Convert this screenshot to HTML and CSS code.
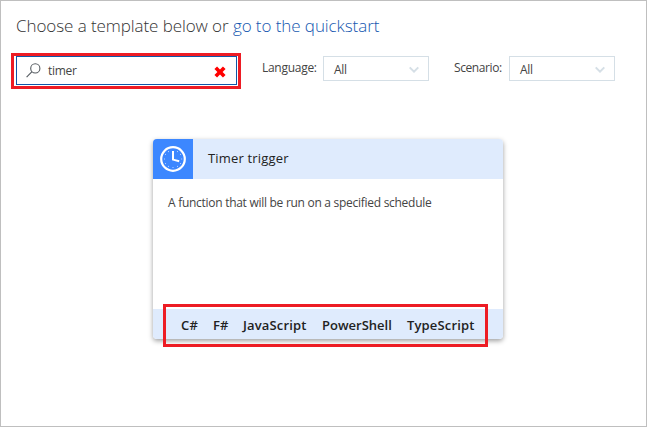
FILE: index.html
```html
<!DOCTYPE html>
<html lang="en">
<head>
<meta charset="utf-8">
<title>Choose a template</title>
<link rel="stylesheet" href="styles.css">
</head>
<body>
<main class="page">
  <h1 class="title"><span>Choose a template below or</span> <a class="link">go to the quickstart</a></h1>
  <div class="filters">
    <div class="search-mark">
      <div class="search">
        <svg class="search-icon" width="15" height="15" viewBox="0 0 15 15"><circle cx="9.3" cy="5.4" r="4.6"/><path d="M6 8.7L.6 14.2"/></svg>
        <span class="query">timer</span>
        <svg class="clear" width="12" height="12" viewBox="0 0 11 11"><path d="M2.8.4L5.5 3.1 8.2.4l2.4 2.4-2.7 2.7 2.7 2.7-2.4 2.4-2.7-2.7-2.7 2.7L.4 8.2l2.7-2.7L.4 2.8z"/></svg>
      </div>
    </div>
    <label class="label language">Language:</label>
    <div class="select"><span>All</span><svg width="10" height="8" viewBox="0 0 10 8"><path d="M.7 1.4L5 5.7l4.3-4.3"/></svg></div>
    <label class="label scenario">Scenario:</label>
    <div class="select"><span>All</span><svg width="10" height="8" viewBox="0 0 10 8"><path d="M.7 1.4L5 5.7l4.3-4.3"/></svg></div>
  </div>
  <article class="card">
    <header class="card-head">
      <div class="card-icon">
        <svg width="26" height="26" viewBox="0 0 26 26"><circle class="rim" cx="13" cy="13" r="11.8"/><path class="hands" d="M13 5v8.6l6.2 1.7"/><path class="ticks" d="M17 5.6h1M20 8.4h1M20 17.6h1M17 20.4h1M12.5 21.5h1M8 20.4h1M5 17.6h1M4 13h1M5 8.4h1M8 5.6h1M21.2 13h1"/></svg>
      </div>
      <h2 class="card-title">Timer trigger</h2>
    </header>
    <p class="description">A function that will be run on a specified schedule</p>
    <footer class="card-foot">
      <div class="languages">
        <span class="cs">C#</span><span class="fs">F#</span><span class="js">JavaScript</span><span class="ps">PowerShell</span><span class="ts">TypeScript</span>
      </div>
    </footer>
  </article>
</main>
</body>
</html>
```
FILE: styles.css
```css
* { box-sizing: border-box; }
body { margin: 0; background: #fff; color: #444; font: 12px/16px "Open Sans", sans-serif; letter-spacing: -.28px; }
.page { height: 427px; border: 1px solid #bfbfbf; padding: 12px 0 0 10px; }
.title { margin: 0 0 0 5px; height: 26px; line-height: 26px; font-size: 17px; font-weight: 300; letter-spacing: -.08px; white-space: nowrap; color: #333; }
.link { color: #1558b0; }
.filters { display: flex; align-items: flex-start; margin-top: 14px; height: 36px; }
.search-mark { width: 230px; height: 36px; border: 3px solid #ed1c24; padding: 0 1px 0 2px; }
.search { display: flex; align-items: center; height: 29px; border: 1px solid #0f56a8; padding: 0 10px 0 9px; }
.search-icon { fill: none; stroke: #555b60; stroke-width: 1.1; }
.query { margin: 1px 0 0 7px; }
.clear { margin: 3px 0 0 auto; fill: #f00; }
.label { margin-top: 7px; white-space: nowrap; }
.language { width: 61px; margin-left: 21px; }
.scenario { width: 55px; margin-left: 25px; letter-spacing: -.4px; }
.select { display: flex; align-items: center; justify-content: space-between; width: 106px; height: 25px; margin-top: 3px; border: 1px solid #d5dfe6; padding: 3px 9px 0 10px; }
.select svg { fill: none; stroke: #d5dfe6; stroke-width: 2; }
.card { display: flex; flex-direction: column; width: 350px; height: 200px; margin: 50px 0 0 142px; border-radius: 4px; background: #fff; box-shadow: 0 2px 5px rgba(0,0,0,.38); }
.card-head { display: flex; height: 40px; background: #dfebfd; border-radius: 4px 4px 0 0; overflow: hidden; }
.card-icon { display: grid; place-items: center; width: 40px; height: 40px; background: #3c87ff; }
.card-icon svg { fill: none; stroke: #fff; }
.rim { stroke-width: 2.2; }
.hands { stroke-width: 2; }
.ticks { stroke-width: 1; opacity: .65; }
.card-title { margin: 0 0 0 15px; font-size: 13px; line-height: 39px; font-weight: 400; letter-spacing: .18px; color: #222; }
.description { flex: 1; margin: 16px 0 0 15px; white-space: nowrap; }
.card-foot { height: 30px; background: #dfebfd; border-radius: 0 0 4px 4px; padding-left: 10px; }
.languages { display: flex; align-items: center; width: 325px; height: 43px; margin-top: -5px; border: 3px solid #ed1c24; padding: 0 0 2px 15px; color: #222; font-size: 13px; font-weight: 600; letter-spacing: .15px; white-space: nowrap; }
.cs { width: 32px; }
.fs { width: 30px; }
.js { width: 79px; }
.ps { width: 85px; letter-spacing: 0; }
```
